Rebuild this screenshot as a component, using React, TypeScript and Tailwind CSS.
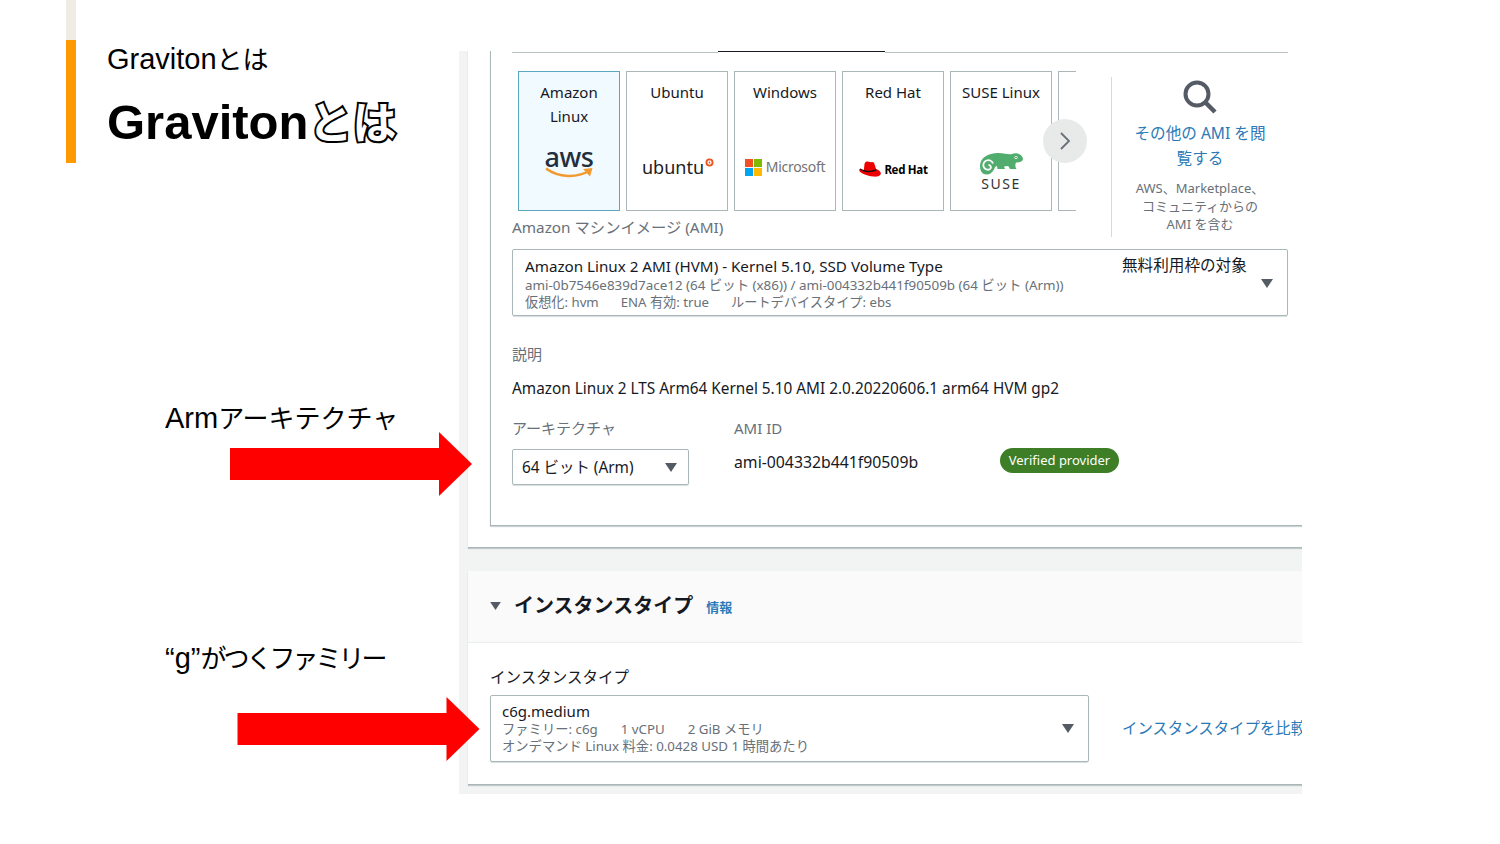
const slideFont = { fontFamily: '"Liberation Sans", "Noto Sans CJK JP", sans-serif' };

function Caret({ className }: { className: string }) {
  return (
    <svg viewBox="0 0 12 9" className={className}>
      <path d="M0 0H12L6 9Z" fill="#545b64" />
    </svg>
  );
}

function Arrow({ className }: { className: string }) {
  return (
    <svg viewBox="0 0 242 64" className={className}>
      <path d="M0 16H209V0L242 32L209 64V48H0Z" fill="#ff0000" />
    </svg>
  );
}

function AwsLogo() {
  return (
    <div className="flex flex-col items-center">
      <span className="text-[27px] leading-[20px] font-medium text-[#232f3e] tracking-[-0.5px]">aws</span>
      <svg viewBox="0 0 48 12" className="w-[48px] h-[12px]">
        <path d="M1 1.500C14 11 32 11 44 4" fill="none" stroke="#f29a2e" strokeWidth="2.600" />
        <path d="M38 2L47.500 1L45 9.500Z" fill="#f29a2e" />
      </svg>
    </div>
  );
}

function UbuntuLogo() {
  return (
    <div className="flex items-start gap-[1px] mt-[4px] ml-[2px]">
      <span className="text-[18px] leading-[24px] text-[#222]">ubuntu</span>
      <svg viewBox="0 0 10 10" className="w-[9px] h-[9px] mt-[3px]">
        <circle cx="5" cy="5" r="3.400" fill="none" stroke="#e95420" strokeWidth="2" />
        <circle cx="5" cy="5" r="1" fill="#e95420" />
      </svg>
    </div>
  );
}

function MicrosoftLogo() {
  return (
    <div className="flex items-center gap-[4px] mt-[6px]">
      <div className="grid grid-cols-2 gap-[1px] w-[17px] h-[17px]">
        <div className="bg-[#f25022]" />
        <div className="bg-[#7fba00]" />
        <div className="bg-[#00a4ef]" />
        <div className="bg-[#ffb900]" />
      </div>
      <span className="text-[14px] leading-[20px] text-[#737373] tracking-[-0.3px]">Microsoft</span>
    </div>
  );
}

function RedHatLogo() {
  return (
    <div className="flex items-center gap-[3px] mt-[10px]">
      <svg viewBox="0 0 24 18" className="w-[23px] h-[17px]">
        <path
          d="M8 1C10 0 12 1.500 14 1.200C16 1 17 1.500 17.500 4L19 8.500C21.500 9.500 24 11 24 13C24 16 20 17 16 16.500C10 16 1 12.500 1 9.500C1 9 1.500 8.500 2.500 8C2.500 9 4 9.500 6 9.800L6.500 5C6.700 3 7 1.500 8 1Z"
          fill="#e00"
        />
        <path d="M2.500 8C6 10.500 13 11.500 19 8.500L19.400 10C13 13 6 12 2 9Z" fill="#111" />
      </svg>
      <span className="text-[11.5px] leading-[16px] font-bold text-black tracking-[-0.3px]">Red Hat</span>
    </div>
  );
}

function SuseLogo() {
  return (
    <div className="flex flex-col items-center">
      <svg viewBox="0 0 44 24" className="w-[44px] h-[24px]">
        <path
          d="M1 15C1 7 9 2 19 2C26 2 30 4 33 3C37 1 43 3 44 7.500C44 10.500 41 11.500 37 11.500C36 14 36 16 37.500 18H31C30 16.500 30 15.500 29 15L25 15.500L26 18H18.500L18 15C16 15.500 15.500 17 15 18.500C13.500 21.500 10.500 23.500 7.500 23.500C3.500 23.500 1 20 1 15Z"
          fill="#51ad6e"
        />
        <path
          d="M14 12.500C13 9.500 10 8.500 7.500 9.500C4.500 10.500 3.500 14 5 16.500C6.500 19 10 19.500 11.500 17.500C12.500 16 11.500 14 9.500 14"
          fill="none"
          stroke="#fff"
          strokeWidth="1.800"
        />
        <circle cx="37" cy="6.500" r="1.600" fill="#fff" />
        <circle cx="37" cy="6.500" r="0.700" fill="#1d5c34" />
      </svg>
      <span className="text-[14px] leading-[16px] text-[#333] tracking-[1.5px] mt-[1px]">SUSE</span>
    </div>
  );
}

const distros = [
  { name: 'Ubuntu', logo: <UbuntuLogo /> },
  { name: 'Windows', logo: <MicrosoftLogo /> },
  { name: 'Red Hat', logo: <RedHatLogo /> },
  { name: 'SUSE Linux', logo: <SuseLogo /> },
];

function DistroCard({ name, logo }: { name: string; logo: React.ReactNode }) {
  return (
    <div className="w-[102px] h-[140px] shrink-0 border border-[#aab7b8] bg-white flex flex-col items-center pt-[8px]">
      <div className="text-[15px] leading-[24px] text-[#16191f] h-[48px] whitespace-nowrap">{name}</div>
      <div className="flex-1 flex items-start justify-center pt-[23px]">{logo}</div>
    </div>
  );
}

function AmiSection() {
  return (
    <div className="h-[497px] bg-white border-b border-[#aab7b8] shadow-[0_1px_1px_rgba(0,28,36,0.2)] pl-[22px]">
      <div className="h-[475px] border-l border-b border-[#aab7b8] shadow-[0_1px_1px_rgba(0,28,36,0.2)] pl-[21px]">
        <div className="w-[776px]">
          <div className="flex h-[2px]">
            <div className="w-[206px] h-px mt-px bg-[#b9c2c3]" />
            <div className="w-[167px] h-px bg-[#16191f]" />
            <div className="flex-1 h-px mt-px bg-[#b9c2c3]" />
          </div>

          <div className="flex h-[166px] mt-[18px]">
            <div className="w-[599px]">
              <div className="relative w-[558px] ml-[6px]">
                <div className="flex gap-[6px] w-[558px] overflow-hidden">
                  <div className="w-[102px] h-[140px] shrink-0 border border-[#5ba7c0] bg-[#f1faff] flex flex-col items-center pt-[8px]">
                    <div className="text-[15px] leading-[24px] text-[#16191f] h-[48px] text-center">
                      Amazon
                      <br />
                      Linux
                    </div>
                    <div className="flex-1 flex justify-center pt-[19px]">
                      <AwsLogo />
                    </div>
                  </div>
                  {distros.map((d) => (
                    <DistroCard key={d.name} name={d.name} logo={d.logo} />
                  ))}
                  <div className="w-[102px] h-[140px] shrink-0 border border-[#aab7b8]" />
                </div>
                <div className="absolute left-[525px] top-[48px] w-[44px] h-[44px] rounded-full bg-[#e8e9e9] flex items-center justify-center">
                  <svg viewBox="0 0 12 20" className="w-[12px] h-[20px]">
                    <path d="M2 2L10 10L2 18" fill="none" stroke="#687078" strokeWidth="1.800" />
                  </svg>
                </div>
              </div>
              <div className="mt-[6px] text-[15.3px] leading-[20px] text-[#687078]">Amazon マシンイメージ (AMI)</div>
            </div>

            <div className="w-[1px] h-[160px] mt-[6px] bg-[#d5dbdb]" />

            <div className="w-[176px] flex flex-col items-center">
              <svg viewBox="0 0 36 36" className="w-[36px] h-[36px] mt-[8px]">
                <circle cx="15" cy="15" r="11.500" fill="none" stroke="#545b64" strokeWidth="4" />
                <path d="M23 23L33 33" stroke="#545b64" strokeWidth="4.500" />
              </svg>
              <div className="mt-[6px] text-[15.6px] leading-[25px] text-[#2a7ab8] text-center">
                その他の AMI を閲
                <br />
                覧する
              </div>
              <div className="mt-[8px] text-[13px] leading-[18px] text-[#687078] text-center whitespace-nowrap">
                AWS、Marketplace、
                <br />
                コミュニティからの
                <br />
                AMI を含む
              </div>
            </div>
          </div>

          <div className="h-[67px] mt-[12px] border border-[#aab7b8] rounded-[2px] shadow-[0_1px_1px_rgba(0,28,36,0.15)] flex pl-[12px] pt-[6px]">
            <div className="w-[597px]">
              <div className="text-[15.2px] leading-[20px] text-[#16191f]">Amazon Linux 2 AMI (HVM) - Kernel 5.10, SSD Volume Type</div>
              <div className="text-[13.4px] leading-[18px] text-[#687078] whitespace-nowrap">
                ami-0b7546e839d7ace12 (64 ビット (x86)) / ami-004332b441f90509b (64 ビット (Arm))
              </div>
              <div className="flex gap-[22px] text-[13.2px] leading-[17px] text-[#687078]">
                <span>仮想化: hvm</span>
                <span>ENA 有効: true</span>
                <span>ルートデバイスタイプ: ebs</span>
              </div>
            </div>
            <div className="w-[125px] text-[15.6px] leading-[18px] text-[#16191f] whitespace-nowrap">無料利用枠の対象</div>
            <Caret className="w-[12px] h-[9px] mt-[23px] ml-[14px]" />
          </div>

          <div className="mt-[27px] text-[15px] leading-[22px] text-[#687078]">説明</div>
          <div className="mt-[12px] text-[15.35px] leading-[22px] text-[#16191f] whitespace-nowrap">
            Amazon Linux 2 LTS Arm64 Kernel 5.10 AMI 2.0.20220606.1 arm64 HVM gp2
          </div>

          <div className="flex mt-[18px]">
            <div className="w-[222px]">
              <div className="text-[15px] leading-[22px] text-[#687078]">アーキテクチャ</div>
              <div className="w-[177px] h-[36px] mt-[10px] border border-[#aab7b8] rounded-[2px] shadow-[0_1px_1px_rgba(0,28,36,0.15)] flex items-center justify-between pl-[9px] pr-[11px]">
                <span className="text-[15.4px] leading-[20px] text-[#16191f] pt-[2px]">64 ビット (Arm)</span>
                <Caret className="w-[12px] h-[9px]" />
              </div>
            </div>
            <div className="w-[266px]">
              <div className="text-[15px] leading-[22px] text-[#687078]">AMI ID</div>
              <div className="mt-[12px] text-[15.8px] leading-[22px] text-[#16191f]">ami-004332b441f90509b</div>
            </div>
            <div className="mt-[31px] w-[119px] h-[25px] rounded-full bg-[#3d7e27] text-white text-[13px] leading-[25px] text-center whitespace-nowrap">
              Verified provider
            </div>
          </div>
        </div>
      </div>
    </div>
  );
}

function InstanceSection() {
  return (
    <div className="mt-[23px] h-[214px] bg-white border-b border-[#aab7b8] shadow-[0_1px_1px_rgba(0,28,36,0.2)]">
      <div className="h-[72px] bg-[#fafafa] border-b border-[#eaeded] flex items-center pl-[22px] pb-[2px]">
        <Caret className="w-[11px] h-[8px]" />
        <span className="ml-[13px] text-[20px] font-bold text-[#16191f] leading-[28px]">インスタンスタイプ</span>
        <span className="ml-[13px] mt-[4px] text-[13px] font-bold text-[#2a7ab8]">情報</span>
      </div>
      <div className="pl-[22px]">
        <div className="mt-[23px] text-[15.5px] leading-[22px] text-[#16191f]">インスタンスタイプ</div>
        <div className="flex items-center mt-[7px]">
          <div className="w-[599px] h-[67px] shrink-0 border border-[#aab7b8] rounded-[2px] shadow-[0_1px_1px_rgba(0,28,36,0.15)] flex items-center justify-between pl-[11px] pr-[14px]">
            <div>
              <div className="text-[15px] leading-[18px] text-[#16191f]">c6g.medium</div>
              <div className="flex gap-[23px] text-[13.3px] leading-[18px] text-[#687078]">
                <span>ファミリー: c6g</span>
                <span>1 vCPU</span>
                <span>2 GiB メモリ</span>
              </div>
              <div className="text-[13.3px] leading-[17px] text-[#687078]">オンデマンド Linux 料金: 0.0428 USD 1 時間あたり</div>
            </div>
            <Caret className="w-[12px] h-[9px]" />
          </div>
          <span className="ml-[33px] text-[15.4px] text-[#2a7ab8] whitespace-nowrap">インスタンスタイプを比較</span>
        </div>
      </div>
    </div>
  );
}

export default function App() {
  return (
    <div className="relative w-[1500px] h-[844px] bg-white overflow-hidden flex">
      <div className="w-[459px] shrink-0" style={slideFont}>
        <div className="flex ml-[66px]">
          <div className="w-[10px]">
            <div className="h-[40px] bg-[#efece4]" />
            <div className="h-[123px] bg-[#ff9900]" />
          </div>
          <div className="ml-[31px] pt-[42px]">
            <div className="text-[29px] leading-[34px] text-black whitespace-nowrap">
              Graviton<span className="text-[26px]">とは</span>
            </div>
            <div className="mt-[19px] text-[49px] leading-[52px] font-bold text-black whitespace-nowrap">
              Graviton
              <span className="text-[44px] text-white [-webkit-text-stroke:4px_black] [paint-order:stroke_fill]">とは</span>
            </div>
          </div>
        </div>
        <div className="ml-[165px] mt-[237px] text-[29px] leading-[36px] text-black whitespace-nowrap">
          Arm<span className="text-[26px]">アーキテクチャ</span>
        </div>
        <div className="ml-[165px] mt-[203px] text-[29px] leading-[36px] text-black whitespace-nowrap">
          “g”<span className="text-[26px] tracking-[-3px]">がつくファミリー</span>
        </div>
      </div>

      <div className="w-[843px] h-[743px] mt-[51px] bg-[#f2f3f3] pl-[9px] overflow-hidden" style={{ fontFamily: '"Noto Sans", "Noto Sans CJK JP", sans-serif' }}>
        <AmiSection />
        <InstanceSection />
      </div>

      <Arrow className="absolute left-[230px] top-[432px] w-[242px] h-[64px]" />
      <Arrow className="absolute left-[237px] top-[697px] w-[243px] h-[64px]" />
    </div>
  );
}
